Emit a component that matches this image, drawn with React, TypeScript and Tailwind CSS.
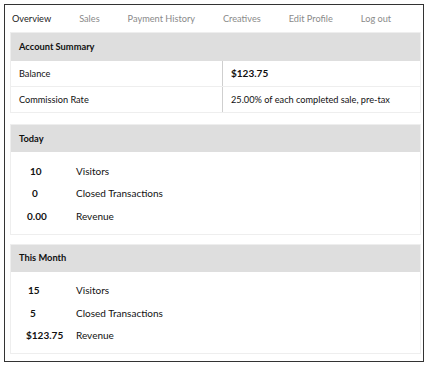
const nav = ["Overview", "Sales", "Payment History", "Creatives", "Edit Profile", "Log out"];

const today = [
  { value: "10", label: "Visitors", pad: "pl-[19px]" },
  { value: "0", label: "Closed Transactions", pad: "pl-[21px]" },
  { value: "0.00", label: "Revenue", pad: "pl-[16px]" },
];

const month = [
  { value: "15", label: "Visitors", pad: "pl-[17px]" },
  { value: "5", label: "Closed Transactions", pad: "pl-[19px]" },
  { value: "$123.75", label: "Revenue", pad: "pl-[15px]" },
];

function StatBlock({ title, rows }: { title: string; rows: { value: string; label: string; pad: string }[] }) {
  return (
    <div className="border border-[#eeeeee]">
      <div className="h-[27px] bg-[#dedede] pl-[8px] flex items-center text-[9.3px] font-bold text-[#111]">{title}</div>
      <div className="pt-[8px] pb-[6px]">
        {rows.map((r) => (
          <div key={r.label} className="flex items-center h-[22.5px] text-[10px] text-[#111]">
            <span className={"w-[65px] shrink-0 font-bold " + r.pad}>{r.value}</span>
            <span>{r.label}</span>
          </div>
        ))}
      </div>
    </div>
  );
}

export default function App() {
  return (
    <div className="p-[4px] bg-white" style={{ fontFamily: 'Lato, sans-serif' }}>
      <div className="w-[420px] h-[358px] border border-[#333] pl-[5px] pr-[2px]">
        <div className="h-[27px] flex items-center gap-[28px] pl-[2px] text-[9.2px] text-[#8a8a8a]">
          {nav.map((n, i) => (
            <span key={n} className={i === 0 ? "text-[#222]" : ""}>
              {n}
            </span>
          ))}
        </div>

        <div className="border border-[#eeeeee]">
          <div className="h-[28px] bg-[#dedede] pl-[8px] flex items-center text-[9.3px] font-bold text-[#111]">
            Account Summary
          </div>
          <div className="flex h-[26px] border-b border-[#eeeeee] text-[9.2px] text-[#111]">
            <div className="w-[211px] pl-[8px] flex items-center">Balance</div>
            <div className="flex-1 border-l border-[#cfcfcf] pl-[8px] flex items-center font-bold text-[10px]">$123.75</div>
          </div>
          <div className="flex h-[25px] text-[9.2px] text-[#111]">
            <div className="w-[211px] pl-[8px] flex items-center">Commission Rate</div>
            <div className="flex-1 border-l border-[#cfcfcf] pl-[8px] flex items-center">25.00% of each completed sale, pre-tax</div>
          </div>
        </div>

        <div className="mt-[11px]">
          <StatBlock title="Today" rows={today} />
        </div>
        <div className="mt-[9px]">
          <StatBlock title="This Month" rows={month} />
        </div>
      </div>
    </div>
  );
}
